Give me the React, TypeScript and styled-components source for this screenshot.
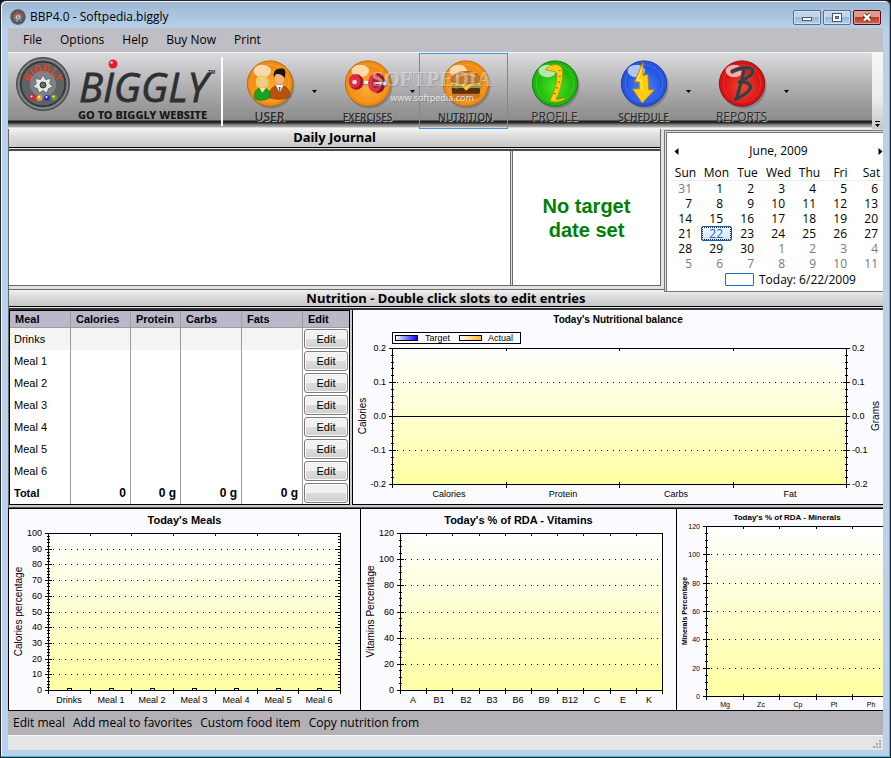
import React, { useLayoutEffect, useRef, useState } from "react";
import styled, { createGlobalStyle, css } from "styled-components";

const UI = `"Open Sans", "Noto Sans", sans-serif`;
const SANS = `"Liberation Sans", Arial, sans-serif`;
const WIDE = `"Noto Sans", "DejaVu Sans", sans-serif`;

const GlobalStyle = createGlobalStyle`
  *, *::before, *::after { box-sizing: border-box; }
  body { margin: 0; background: #15171a; font: 12px/16px ${UI}; color: #000; }
  button { font: inherit; color: inherit; background: none; border: 0; padding: 0; margin: 0; }
`;

/* ---------- window frame ---------- */

const Window = styled.div`
  display: flex;
  flex-direction: column;
  min-height: 100vh;
  padding: 0 7px 7px 6px;
  border: 1px solid #22262b;
  border-radius: 6px 6px 0 0;
  background: linear-gradient(#9cb6d3 0, #b9d1ea 28px, #b9d1ea);
  box-shadow: inset -1px -1px #2fc4e0, inset 1px 1px #f4f8fc;
`;

const TitleBar = styled.header`
  display: flex;
  align-items: center;
  gap: 4px;
  height: 27px;
  padding: 5px 2px 0 3px;
`;

const Title = styled.h1`
  flex: 1;
  margin: 0;
  font: 12px/16px ${UI};
`;

const Caption = styled.div`
  display: flex;
  gap: 2px;
  align-self: flex-start;
  margin-top: 4px;
`;

const CaptionButton = styled.button<{ $danger?: boolean }>`
  display: grid;
  place-items: center;
  width: 28px;
  height: 15px;
  border: 1px solid ${(p) => (p.$danger ? "#4a1216" : "#56708f")};
  border-radius: 2px;
  box-shadow: inset 0 0 0 1px ${(p) => (p.$danger ? "#e3a295" : "#d3e2f1")};
  background: ${(p) =>
    p.$danger
      ? "linear-gradient(#e09a8c 0 45%, #bb3b26 50%, #d0664f)"
      : "linear-gradient(#c2d6ea 0 45%, #9ab7d5 50%, #b4cfe8)"};
`;

const Client = styled.main`
  display: flex;
  flex: 1;
  flex-direction: column;
  margin: 0 0 0 1px;
  min-width: 0;
  background: #e4e6e5;
`;

const MenuBar = styled.nav<{ $foot?: boolean }>`
  display: flex;
  align-items: center;
  height: 24px;
  ${(p) =>
    p.$foot
      ? css`
          gap: 8px;
          padding: 0 5px;
          background: #b3b1b6;
        `
      : css`
          gap: 18px;
          padding: 0 15px;
          background: #bfbec5;
        `}
`;

/* ---------- toolbar ---------- */

const ToolStrip = styled.div`
  display: flex;
  height: 77px;
  background: #f2f2f2;
`;

const ToolBand = styled.div`
  position: relative;
  display: flex;
  flex: 1;
  min-width: 0;
  padding-top: 1px;
  border-top: 1px solid #f2f1f3;
  border-top-right-radius: 3px;
  background: linear-gradient(
    #dcdbde 0,
    #c4c3c5 18px,
    #a4a3a5 44px,
    #8c8c8c 67px,
    #1c1c1c 68px,
    #2e2e2e 70px,
    #6c6c6c 71px,
    #b4b4b4 74px,
    #f1f4e8 75px
  );
`;

const LogoButton = styled.button`
  width: 213px;
  height: 74px;
`;

const Divider = styled.span`
  width: 2px;
  height: 69px;
  margin: 3px 0;
  background: #fff;
`;

const ToolButton = styled.button<{ $active?: boolean }>`
  display: flex;
  flex-direction: column;
  align-items: center;
  width: 89px;
  height: 76px;
  margin-top: -1px;
  padding: 4px 0 0 4px;
  border: 1px solid ${(p) => (p.$active ? "#3f97ea" : "transparent")};
`;

const ToolLabel = styled.span<{ $size: number; $light?: boolean }>`
  font: ${(p) => p.$size}px/14px ${UI};
  font-weight: ${(p) => (p.$light ? 400 : 600)};
  color: #2c2c2c;
  text-shadow: 1px 1px #aaa;
`;

const DropButton = styled.button`
  display: flex;
  align-items: center;
  width: 9px;
  height: 76px;
  margin-top: -1px;
`;

const Watermark = styled.div`
  position: absolute;
  left: 364px;
  top: 14px;
  display: flex;
  flex-direction: column;
  align-items: center;
  pointer-events: none;
  color: rgba(255, 255, 255, 0.4);
  font: 700 21px/24px "Liberation Serif", serif;
  text-shadow: 1px 1px rgba(90, 90, 90, 0.3);
`;

const WatermarkUrl = styled.span`
  font: 9px/14px ${WIDE};
  color: rgba(255, 255, 255, 0.75);
`;

const Overflow = styled.button`
  display: flex;
  align-items: flex-end;
  justify-content: center;
  width: 11px;
  padding-bottom: 2px;
  background: linear-gradient(#f6f6f6, #ececec 60%, #c8c8c8);
`;

/* ---------- workspace ---------- */

const Workspace = styled.div`
  display: flex;
  flex: 1;
  flex-direction: column;
  border-left: 1px solid #6a6a6a;
  background: #e2e2e2;
`;

const TopRow = styled.div`
  display: grid;
  grid-template-columns: minmax(0, 1fr) 219px;
  grid-template-rows: 157px;
  column-gap: 3px;
  height: 157px;
`;

const JournalPane = styled.section`
  display: grid;
  grid-template-rows: auto 1fr;
  row-gap: 1px;
  border-right: 1px solid #6a6a6a;
`;

const Heading = styled.h2<{ $line?: boolean }>`
  height: ${(p) => (p.$line ? 18 : 19)}px;
  margin: 0;
  border-bottom: 1px solid #000;
  border-top: ${(p) => (p.$line ? "1px solid #666" : "0")};
  background: linear-gradient(#f2f2f0, #dcdcdc 40%, #c8c8c8);
  font: 700 13px/17px ${WIDE};
  text-align: center;
`;

const JournalBody = styled.div`
  display: grid;
  grid-template-columns: minmax(0, 1fr) 148px;
  column-gap: 1px;
  min-height: 0;
  border-top: 2px solid #4a4a4a;
  border-bottom: 1px solid #6a6a6a;
`;

const Journal = styled.textarea`
  display: block;
  width: 100%;
  height: 100%;
  resize: none;
  border: 0;
  border-right: 1px solid #6a6a6a;
  outline: 0;
  background: #fff;
  font: 12px/16px ${UI};
`;

const Target = styled.p`
  display: grid;
  place-items: center;
  margin: 0;
  padding: 0 24px;
  border-left: 1px solid #6a6a6a;
  background: #fff;
  color: #008000;
  font: 700 20px/24px ${SANS};
  text-align: center;
`;

const Calendar = styled.section`
  position: relative;
  height: 162px;
  margin-top: 1px;
  padding: 12px 0 0 4px;
  overflow: hidden;
  border: 1px solid #777;
  border-right: 0;
  background: #fff;
  box-shadow: inset 1px 1px #ddd, inset 2px 2px #777;
`;

const CalHead = styled.div`
  display: flex;
  align-items: center;
  justify-content: space-between;
  height: 16px;
  padding: 0 0 0 5px;
`;

const CalTable = styled.table`
  width: 217px;
  margin: 7px 0 0 1px;
  border-collapse: collapse;
  table-layout: fixed;
  th {
    height: 14px;
    padding: 0;
    border-bottom: 1px solid #eee;
    font: 12px/13px ${UI};
  }
  td {
    padding: 0;
  }
`;

const Day = styled.button<{ $dim?: boolean; $today?: boolean }>`
  display: block;
  width: 31px;
  height: 15px;
  padding-right: 8px;
  border: 1px solid ${(p) => (p.$today ? "#0a5fb8" : "transparent")};
  border-radius: 2px;
  background: ${(p) => (p.$today ? "linear-gradient(#f2f9ff, #cfe6fa)" : "none")};
  outline: ${(p) => (p.$today ? "1px dotted #223" : "0")};
  outline-offset: -2px;
  color: ${(p) => (p.$today ? "#1464c8" : p.$dim ? "#7a7a7a" : "#000")};
  font: 12px/13px ${UI};
  text-align: right;
`;

const TodayRow = styled.button`
  display: flex;
  align-items: center;
  gap: 5px;
  margin: 1px 0 0 56px;
  height: 16px;
`;

const TodaySwatch = styled.span`
  width: 29px;
  height: 13px;
  border: 1px solid #1f6fc4;
  border-radius: 1px;
`;

const Gap = styled.div`
  height: 3px;
`;

const MiddleRow = styled.div`
  display: grid;
  grid-template-columns: 341px minmax(0, 1fr);
  column-gap: 2px;
  margin-top: 1px;
  padding-bottom: 2px;
  border-top: 2px solid #333;
  border-bottom: 1px solid #555;
  background: #ccc;
`;

const MealPanel = styled.section`
  border: 1px solid #000;
  background: #fff;
`;

const MealTable = styled.table`
  width: 100%;
  border-collapse: separate;
  border-spacing: 0;
  table-layout: fixed;
  font: 12px/16px ${SANS};
  th,
  td {
    height: 22px;
    padding: 0 4px;
    border-right: 1px solid #9c9c9c;
    font-size: 11px;
    text-align: left;
    white-space: nowrap;
  }
  thead th {
    height: 17px;
    padding: 0 5px;
    border-bottom: 1px solid #9c9c9c;
    background: #bab8c8;
  }
  tbody th {
    font-weight: 400;
  }
  tbody tr:first-child > * {
    background: #f4f4f4;
  }
  tfoot td {
    font-weight: 700;
    font-size: 12px;
    text-align: right;
  }
  tr > :last-child {
    padding-left: 1px;
    padding-right: 1px;
    border-right: 0;
  }
  thead tr > :last-child {
    padding-left: 5px;
  }
  tbody tr:first-child > :last-child {
    background: #fff;
  }
`;

const EditButton = styled.button`
  display: block;
  width: 100%;
  height: 20px;
  border: 1px solid #7b7b7b;
  border-radius: 3px;
  box-shadow: inset 0 0 0 1px #fafafa;
  background: linear-gradient(#f2f2f2 0 48%, #dcdcdc 52%, #cfcfcf);
  font: 11px/16px ${SANS};
`;

const ChartRow = styled.div`
  display: grid;
  flex: 1;
  grid-template-columns: 352fr 316fr 207fr;
  min-height: 200px;
  margin-left: -1px;
  border: solid #000;
  border-width: 1px 0;
`;

const ChartPanel = styled.figure<{ $framed?: boolean }>`
  min-width: 0;
  height: 100%;
  margin: 0;
  overflow: hidden;
  border: 0 solid #000;
  border-left-width: 1px;
  border-bottom-width: ${(p) => (p.$framed ? 1 : 0)}px;
  background: #fbfaff;
  svg {
    display: block;
    shape-rendering: crispEdges;
    font-family: ${SANS};
  }
`;

const StatusBar = styled.footer`
  display: flex;
  align-items: flex-end;
  justify-content: flex-end;
  height: 15px;
  padding: 0 1px 1px;
  border-top: 1px solid #f4f4f4;
  background: #e4e6e5;
`;

/* ---------- charts ---------- */

interface ChartSpec {
  title: string;
  titleSize: number;
  titleY: number;
  size: number;
  axis: string;
  axisX: number;
  axisSize: number;
  axisBold?: boolean;
  rightAxis?: string;
  values: string[];
  sub: number;
  cats: string[];
  box: { left: number; top: number; right: number; bottom: number };
  titleX?: number;
  mirror?: boolean;
  bumps?: boolean;
  legend?: boolean;
  framed?: boolean;
  zero?: boolean;
  id: string;
}

function Chart(spec: ChartSpec) {
  const ref = useRef<HTMLElement>(null);
  const [dim, setDim] = useState({ w: 300, h: 190 });
  useLayoutEffect(() => {
    const el = ref.current;
    if (!el) return;
    const read = () => setDim({ w: el.clientWidth, h: el.clientHeight });
    read();
    const ro = new ResizeObserver(read);
    ro.observe(el);
    return () => ro.disconnect();
  }, []);

  const { box, values, cats, sub, size } = spec;
  const x0 = box.left;
  const x1 = dim.w - box.right;
  const y0 = box.top;
  const y1 = dim.h - box.bottom;
  const rows = values.length - 1;
  const yAt = (i: number) => Math.round(y0 + ((y1 - y0) * i) / rows);
  const xAt = (i: number) => Math.round(x0 + ((x1 - x0) * i) / cats.length);

  let ticks = "";
  for (let i = 0; i <= rows * sub; i++) {
    const y = Math.round(y0 + ((y1 - y0) * i) / (rows * sub)) + 0.5;
    const r = i % sub === 0 ? 3 : 1;
    ticks += `M${x0 - r} ${y}h${2 * r + 1}`;
    if (spec.rightAxis) ticks += `M${x1 - r} ${y}h${2 * r + 1}`;
    else if (spec.mirror) ticks += `M${x1 - r - 1} ${y}h${r + 1}`;
  }
  cats.forEach((_, i) => {
    const x = xAt(i + 1) + 0.5;
    ticks += `M${x} ${y0}v3M${x} ${y1 - 2}v6`;
  });
  ticks += `M${x0 + 0.5} ${y1}v4`;
  let grid = "";
  for (let i = 1; i < rows; i++) grid += `M${x0 + 5} ${yAt(i) + 0.5}H${x1}`;
  const mid = (y0 + y1) / 2;
  const titleX = spec.titleX ?? dim.w / 2;

  return (
    <ChartPanel ref={ref} $framed={spec.framed} aria-label={spec.title}>
      <svg width={dim.w} height={dim.h} fontSize={size}>
        <defs>
          <linearGradient id={spec.id} x1="0" y1="0" x2="0" y2="1">
            <stop offset="0" stopColor="#fff" />
            <stop offset="1" stopColor="#ffffa3" />
          </linearGradient>
          <linearGradient id={`${spec.id}-t`}>
            <stop offset="0" stopColor="#fff" />
            <stop offset="1" stopColor="#0000ff" />
          </linearGradient>
          <linearGradient id={`${spec.id}-a`}>
            <stop offset="0" stopColor="#fff" />
            <stop offset="1" stopColor="#ffb820" />
          </linearGradient>
        </defs>
        <text x={titleX} y={spec.titleY} fontSize={spec.titleSize} fontWeight="700" textAnchor="middle">
          {spec.title}
        </text>
        <rect x={x0 + 0.5} y={y0 + 0.5} width={Math.max(x1 - x0, 0)} height={Math.max(y1 - y0, 0)} fill={`url(#${spec.id})`} stroke="#000" />
        <path d={grid} stroke="#000" strokeDasharray="1 5" fill="none" />
        <path d={ticks} stroke="#000" fill="none" />
        {spec.zero && <path d={`M${x0} ${Math.round(mid) + 0.5}H${x1}`} stroke="#000" />}
        {values.map((v, i) => (
          <g key={v}>
            <text x={x0 - 6} y={yAt(i) + 3} textAnchor="end">{v}</text>
            {spec.rightAxis && <text x={x1 + 6} y={yAt(i) + 3}>{v}</text>}
          </g>
        ))}
        {cats.map((c, i) => {
          const cx = Math.round((xAt(i) + xAt(i + 1)) / 2);
          return (
            <g key={c}>
              <text x={cx} y={y1 + size + 4} textAnchor="middle">{c}</text>
              {spec.bumps && <path d={`M${cx - 1.5} ${y1}v-1.500h4v1.500`} stroke="#000" fill="#fff" />}
            </g>
          );
        })}
        <text transform={`translate(${spec.axisX} ${mid}) rotate(-90)`} textAnchor="middle" fontSize={spec.axisSize} fontWeight={spec.axisBold ? 700 : 400}>
          {spec.axis}
        </text>
        {spec.rightAxis && (
          <text transform={`translate(${dim.w - 4} ${mid}) rotate(-90)`} textAnchor="middle" fontSize={spec.axisSize}>{spec.rightAxis}</text>
        )}
        {spec.legend && (
          <g>
            <rect x={x0 + 0.5} y="22.5" width="128" height="11" fill="#fff" stroke="#000" />
            <rect x={x0 + 3.5} y="25.5" width="22" height="5" fill={`url(#${spec.id}-t)`} stroke="#000" />
            <text x={x0 + 33} y="31">Target</text>
            <rect x={x0 + 67.5} y="25.5" width="22" height="5" fill={`url(#${spec.id}-a)`} stroke="#000" />
            <text x={x0 + 96} y="31">Actual</text>
          </g>
        )}
      </svg>
    </ChartPanel>
  );
}

/* ---------- icons ---------- */

const WheelArt = () => (
  <g>
    <circle cx="28" cy="28" r="27" fill="#454a4d" />
    <circle cx="28" cy="28" r="24.500" fill="none" stroke="#818789" strokeWidth="2" />
    <circle cx="28" cy="28" r="22" fill="#606365" stroke="#2b2d2e" />
    <circle cx="28" cy="28" r="13" fill="#7f8284" />
    <path
      d="M28 19l2.500 4.500 5.500-1-1.500 5L38 31l-4.500 1.500L32 37l-4-2.500-4 2.500-1.500-4.500L18 31l3.500-3.500-1.500-5 5.500 1z"
      fill="#e8e8e8"
      stroke="#55585a"
      strokeWidth=".7"
    />
    <circle cx="28" cy="29" r="3" fill="#6a6a6a" stroke="#333" />
    <circle cx="17" cy="41.500" r="3" fill="#e8202c" />
    <circle cx="24.500" cy="42" r="3" fill="#f39a1e" />
    <circle cx="32" cy="42" r="3" fill="#2233d8" />
    <circle cx="39" cy="41.500" r="3" fill="#6a9a24" />
    <circle cx="16.500" cy="40.500" r="1" fill="#fff" />
    <circle cx="24" cy="41" r="1" fill="#fff" />
    <circle cx="31.500" cy="41" r="1" fill="#fff" />
    <circle cx="38.500" cy="40.500" r="1" fill="#fff" />
  </g>
);

const AppIcon = () => (
  <svg width="16" height="16" viewBox="0 0 56 56">
    <WheelArt />
    <path d="M13 26A15.500 15.500 0 0 1 43 26" fill="none" stroke="#c8432c" strokeWidth="5" />
  </svg>
);

const Logo = () => (
  <svg width="213" height="74" viewBox="0 0 213 74">
    <defs>
      <path id="wheelArc" d="M22.300 37A14 14 0 1 1 47.700 37" />
    </defs>
    <g transform="translate(7 2)">
      <WheelArt />
    </g>
    <text fontFamily="Liberation Sans" fontWeight="700" fontSize="10" fill="#f03a1c">
      <textPath href="#wheelArc" startOffset="50%" textAnchor="middle">BIGGLY</textPath>
    </text>
    <g fill="#2d3032">
      <text x="71" y="48" fontFamily="Open Sans" fontStyle="italic" fontSize="40" stroke="#2d3032" strokeWidth=".8">BIGGLY</text>
      <text x="200" y="20" fontFamily="Liberation Sans" fontSize="5" fontWeight="700">TM</text>
    </g>
    <circle cx="105" cy="10" r="4.500" fill="#e6202a" />
    <circle cx="103.500" cy="8.500" r="1.300" fill="#ffc4c4" />
    <text x="70" y="65" fontFamily="Noto Sans" fontSize="11" fontWeight="800" fill="#161616">GO TO BIGGLY WEBSITE</text>
  </svg>
);

interface BallProps {
  id: string;
  light: string;
  dark: string;
  rim: string;
  children: React.ReactNode;
}

const Ball = ({ id, light, dark, rim, children }: BallProps) => (
  <svg width="52" height="52" viewBox="0 0 54 54">
    <defs>
      <radialGradient id={id} cx=".5" cy=".6">
        <stop offset="0" stopColor={light} />
        <stop offset="1" stopColor={dark} />
      </radialGradient>
    </defs>
    <circle cx="28.500" cy="28.500" r="24" fill="#555" opacity=".4" />
    <circle cx="27" cy="26.500" r="23.500" fill={dark} stroke={rim} />
    <circle cx="27" cy="26.500" r="19.500" fill={`url(#${id})`} stroke={light} strokeOpacity=".6" />
    <ellipse cx="19" cy="13.500" rx="9" ry="6.500" fill="#fff" opacity=".65" />
    {children}
  </svg>
);

const ORANGE = { light: "#ffae3c", dark: "#f08c12", rim: "#b9690c" };

const UserIcon = () => (
  <Ball id="ballUser" {...ORANGE}>
    <path d="M26 41c0-9 4-12 11-13 7 1 11 5 11 12-5 3-13 4-22 1z" fill="#b4520e" stroke="#7c3406" strokeWidth=".6" />
    <path d="M33 28h8l-4 8z" fill="#f3f5ff" />
    <path d="M36 30l2 0-1 8z" fill="#2d62c8" />
    <ellipse cx="37" cy="21.500" rx="4.800" ry="6" fill="#f1b47a" />
    <path d="M31 20c-1-7 3-10 9-9 3 0 4 5 2 10-2-4-6-5-9-4z" fill="#171310" />
    <path d="M11 42c-1-8 3-11 8-11s9 3 8 10c-4 3-12 4-16 1z" fill="#18a31c" stroke="#0c6d10" strokeWidth=".6" />
    <path d="M16 31l3 5 4-5z" fill="#f6e0c0" />
    <path d="M13 29c-2-8 1-11 6-11s8 4 6 11c-4 3-8 3-12 0z" fill="#e9cf62" />
    <ellipse cx="19.500" cy="25.500" rx="4" ry="5" fill="#f6c793" />
  </Ball>
);

const ExercisesIcon = () => (
  <Ball id="ballEx" {...ORANGE}>
    <path d="M14 25l28 2" stroke="#eee" strokeWidth="4" />
    <path d="M14 27l28 2" stroke="#777" strokeWidth="1" />
    <ellipse cx="15" cy="25" rx="7.500" ry="8" fill="#a3182c" />
    <ellipse cx="13" cy="24" rx="6" ry="7" fill="#e02c40" />
    <circle cx="13" cy="25" r="2.500" fill="#f3d5d8" />
    <ellipse cx="37" cy="26" rx="8" ry="10.500" fill="#8f1226" />
    <ellipse cx="34" cy="26" rx="7" ry="9.500" fill="#e23346" />
    <ellipse cx="35" cy="26" rx="4" ry="5.500" fill="#b01c30" />
    <path d="M34 26h11" stroke="#ddd" strokeWidth="2" />
    <rect x="42" y="24" width="5" height="5" rx="2" fill="#ddd" stroke="#555" />
  </Ball>
);

const NutritionIcon = () => (
  <Ball id="ballNu" {...ORANGE}>
    <path d="M12 35h30v5q-2 3-15 3t-15-3z" fill="#c9782d" />
    <path d="M12 31h30l-1 6H13z" fill="#5b2b12" />
    <path d="M11 29l6 3 5-2 6 3 6-3 9 2-2-5H12z" fill="#8da33a" />
    <path d="M12 27l10 1 5 6 6-6 8-1-1-3H13z" fill="#ffc83a" />
    <path d="M12 25c0-8 6-11 15-11s15 3 15 11q-15 4-30 0z" fill="#c6752b" stroke="#8a4716" strokeWidth=".6" />
    <path d="M17 20q9-6 20-1" stroke="#eab06a" strokeWidth="2" fill="none" />
  </Ball>
);

const ProfileIcon = () => (
  <Ball id="ballPr" light="#4be81f" dark="#1fb50f" rim="#127a0a">
    <path d="M17 12q6-6 12-5 6 1 6 8 0 8-2 15-2 8-5 13 4 0 10-2l-2 3q-8 3-14 1 0-3 3-8 4-9 4-19 0-4-3-4-4-1-9-2z" fill="#ffcc12" stroke="#a8860a" strokeWidth=".8" />
    <path d="M31 13h2M31 19h2M30 25h2M28 31h2M26 37h2" stroke="#7a5c00" />
  </Ball>
);

const ScheduleIcon = () => (
  <Ball id="ballSc" light="#4d86ff" dark="#2454e0" rim="#1739a3">
    <path d="M26 4l-9 21h5v7h-7l10 15 13-14h-6l-1-16-5 1z" fill="#ffcb0d" stroke="#a97c00" strokeWidth=".8" />
    <path d="M25 10l-5 13h4l1 11" stroke="#fff09a" fill="none" />
  </Ball>
);

const ReportsIcon = () => (
  <Ball id="ballRe" light="#f8452b" dark="#d81318" rim="#930a0e">
    <g fill="none" strokeLinecap="round" strokeLinejoin="round">
      <path d="M17 14q12-6 20-3 4 4-4 9-5 3-9 5 12-1 12 6-3 6-16 12M29 13q-3 14-8 30" stroke="#8b5550" strokeWidth="4.500" />
      <path d="M17 14q12-6 20-3 4 4-4 9-5 3-9 5 12-1 12 6-3 6-16 12M29 13q-3 14-8 30" stroke="#3d3b3e" strokeWidth="3.200" />
    </g>
  </Ball>
);

const DownArrow = () => (
  <svg width="5" height="3" viewBox="0 0 5 3">
    <path d="M0 0h5L2.500 3z" />
  </svg>
);

/* ---------- data ---------- */

const TOOLS = [
  { name: "USER", size: 12, icon: <UserIcon />, drop: true },
  { name: "EXERCISES", size: 10, icon: <ExercisesIcon />, drop: true },
  { name: "NUTRITION", size: 10, icon: <NutritionIcon />, active: true },
  { name: "PROFILE", size: 12, icon: <ProfileIcon />, light: true },
  { name: "SCHEDULE", size: 10, icon: <ScheduleIcon />, drop: true },
  { name: "REPORTS", size: 12, icon: <ReportsIcon />, drop: true, light: true },
];

const MENU = ["File", "Options", "Help", "Buy Now", "Print"];
const ACTIONS = ["Edit meal", "Add meal to favorites", "Custom food item", "Copy nutrition from"];
const COLUMNS: [string, number][] = [["Meal", 61], ["Calories", 60], ["Protein", 50], ["Carbs", 61], ["Fats", 61], ["Edit", 46]];
const MEALS = ["Drinks", "Meal 1", "Meal 2", "Meal 3", "Meal 4", "Meal 5", "Meal 6"];
const WEEKDAYS = ["Sun", "Mon", "Tue", "Wed", "Thu", "Fri", "Sat"];
const WEEKS = [0, 1, 2, 3, 4, 5].map((w) =>
  WEEKDAYS.map((_, d) => {
    const n = w * 7 + d;
    return n === 0 ? { day: 31, dim: true } : n > 30 ? { day: n - 30, dim: true } : { day: n, dim: false };
  })
);

/* ---------- page ---------- */

export default function App() {
  return (
    <>
      <GlobalStyle />
      <Window>
        <TitleBar>
          <AppIcon />
          <Title>BBP4.0 - Softpedia.biggly</Title>
          <Caption>
            <CaptionButton aria-label="Minimize">
              <svg width="12" height="9"><rect x="1.500" y="4.500" width="9" height="3" fill="#fff" stroke="#4b5a70" /></svg>
            </CaptionButton>
            <CaptionButton aria-label="Maximize">
              <svg width="12" height="9"><rect x="1.500" y=".5" width="9" height="8" fill="#fff" stroke="#4b5a70" /><rect x="4.500" y="3.500" width="3" height="2" fill="#9ab7d5" stroke="#4b5a70" /></svg>
            </CaptionButton>
            <CaptionButton $danger aria-label="Close">
              <svg width="12" height="9"><path d="M3 1.500l6 6M9 1.500l-6 6" stroke="#5a3038" strokeWidth="4" /><path d="M3 1.500l6 6M9 1.500l-6 6" stroke="#fff" strokeWidth="2.400" /></svg>
            </CaptionButton>
          </Caption>
        </TitleBar>
        <Client>
          <MenuBar>{MENU.map((m) => <button key={m}>{m}</button>)}</MenuBar>
          <ToolStrip>
            <ToolBand>
              <LogoButton aria-label="Go to Biggly website"><Logo /></LogoButton>
              <Divider />
              {TOOLS.map((t) => (
                <React.Fragment key={t.name}>
                  <ToolButton $active={t.active}>
                    {t.icon}
                    <ToolLabel $size={t.size} $light={t.light}>{t.name}</ToolLabel>
                  </ToolButton>
                  {t.drop && <DropButton aria-label={`${t.name} menu`}><DownArrow /></DropButton>}
                </React.Fragment>
              ))}
              <Watermark>
                SOFTPEDIA
                <WatermarkUrl>www.softpedia.com</WatermarkUrl>
              </Watermark>
            </ToolBand>
            <Overflow aria-label="More tools">
              <svg width="5" height="6"><path d="M0 0h5v1H0zM0 3h5L2.500 6z" /></svg>
            </Overflow>
          </ToolStrip>
          <Workspace>
            <TopRow>
              <JournalPane>
                <Heading>Daily Journal</Heading>
                <JournalBody>
                  <Journal aria-label="Daily Journal" />
                  <Target>No target date set</Target>
                </JournalBody>
              </JournalPane>
              <Calendar>
                <CalHead>
                  <button aria-label="Previous month"><svg width="5" height="7"><path d="M4.500 0v7L.5 3.500z" /></svg></button>
                  <span>June, 2009</span>
                  <button aria-label="Next month"><svg width="5" height="7"><path d="M.5 0v7l4-3.500z" /></svg></button>
                </CalHead>
                <CalTable>
                  <thead><tr>{WEEKDAYS.map((d) => <th key={d} scope="col">{d}</th>)}</tr></thead>
                  <tbody>
                    {WEEKS.map((week, i) => (
                      <tr key={i}>
                        {week.map((c) => (
                          <td key={c.day}><Day $dim={c.dim} $today={c.day === 22}>{c.day}</Day></td>
                        ))}
                      </tr>
                    ))}
                  </tbody>
                </CalTable>
                <TodayRow><TodaySwatch />Today: 6/22/2009</TodayRow>
              </Calendar>
            </TopRow>
            <Gap />
            <Heading $line>Nutrition - Double click slots to edit entries</Heading>
            <MiddleRow>
              <MealPanel>
                <MealTable>
                  <colgroup>{COLUMNS.map(([c, w]) => <col key={c} width={w} />)}</colgroup>
                  <thead><tr>{COLUMNS.map(([c]) => <th key={c} scope="col">{c}</th>)}</tr></thead>
                  <tbody>
                    {MEALS.map((m) => (
                      <tr key={m}>
                        <th scope="row">{m}</th>
                        <td /><td /><td /><td />
                        <td><EditButton>Edit</EditButton></td>
                      </tr>
                    ))}
                  </tbody>
                  <tfoot>
                    <tr>
                      <th scope="row">Total</th>
                      <td>0</td><td>0 g</td><td>0 g</td><td>0 g</td>
                      <td><EditButton aria-label="Edit total" /></td>
                    </tr>
                  </tfoot>
                </MealTable>
              </MealPanel>
              <Chart id="balance" framed legend mirror zero title="Today's Nutritional balance" titleSize={10} titleY={13} size={9}
                axis="Calories" axisX={13} axisSize={10} rightAxis="Grams" values={["0.2", "0.1", "0.0", "-0.1", "-0.2"]} sub={5}
                cats={["Calories", "Protein", "Carbs", "Fat"]} box={{ left: 39, top: 38, right: 37, bottom: 20 }} />
            </MiddleRow>
            <ChartRow>
              <Chart id="meals" mirror bumps title="Today's Meals" titleSize={11} titleY={15} size={9}
                axis="Calories percentage" axisX={13} axisSize={10} values={["100", "90", "80", "70", "60", "50", "40", "30", "20", "10", "0"]} sub={5}
                cats={MEALS} box={{ left: 39, top: 24, right: 20, bottom: 20 }} />
              <Chart id="vitamins" title="Today's % of RDA - Vitamins" titleSize={11} titleY={15} size={9}
                axis="Vitamins Percentage" axisX={13} axisSize={10} values={["120", "100", "80", "60", "40", "20", "0"]} sub={4}
                cats={["A", "B1", "B2", "B3", "B6", "B9", "B12", "C", "E", "K"]} box={{ left: 39, top: 24, right: 14, bottom: 20 }} />
              <Chart id="minerals" title="Today's % of RDA - Minerals" titleSize={8} titleY={11} titleX={110} size={7}
                axis="Minerals Percentage" axisX={10} axisSize={7} axisBold values={["120", "100", "80", "60", "40", "20", "0"]} sub={4}
                cats={["Mg", "Zc", "Cp", "Pt", "Ph"]} box={{ left: 29, top: 17, right: -6, bottom: 14 }} />
            </ChartRow>
          </Workspace>
          <MenuBar $foot>{ACTIONS.map((a) => <button key={a}>{a}</button>)}</MenuBar>
          <StatusBar>
            <svg width="10" height="10" fill="#aaa"><path d="M7 1h2v2H7zM7 4h2v2H7zM4 4h2v2H4zM7 7h2v2H7zM4 7h2v2H4zM1 7h2v2H1z" /></svg>
          </StatusBar>
        </Client>
      </Window>
    </>
  );
}
